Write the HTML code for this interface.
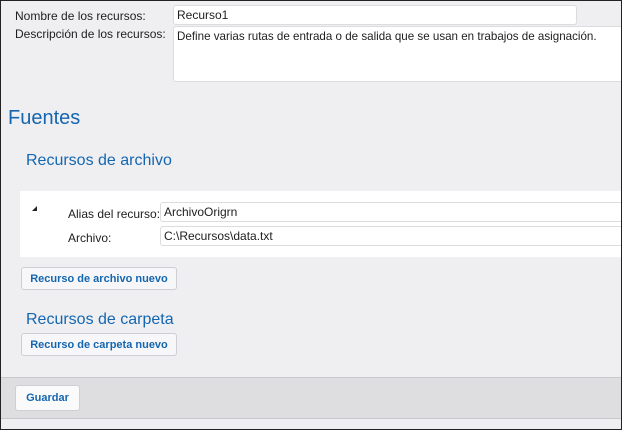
<!DOCTYPE html>
<html><head><style>
*{box-sizing:border-box;margin:0;padding:0}
body{width:622px;height:430px;background:#efeff2;font-family:"Liberation Sans",sans-serif;font-size:12px;color:#1e1e1e;position:relative;overflow:hidden}
.frame{position:absolute;left:0;top:0;width:622px;height:430px;border:1px solid #222;pointer-events:none;z-index:5}
.a{position:absolute;white-space:nowrap}
.inp{position:absolute;background:#fff;border:1px solid #dcdcdf;border-radius:3px;padding:2px 3px;font-size:12px;line-height:14px;white-space:nowrap;overflow:hidden}
.h{color:#1466b0;position:absolute;white-space:nowrap}
.btn{position:absolute;background:#f7f7f9;border:1px solid #cfcfd3;border-radius:3px;color:#1466b0;font-weight:bold;font-size:11px;text-align:center;line-height:22px}
</style></head><body>
<div class="frame"></div>
<div class="a" style="left:15px;top:9px">Nombre de los recursos:</div>
<div class="a" style="left:15px;top:27px">Descripción de los recursos:</div>
<div class="inp" style="left:173px;top:5px;width:404px;height:20px">Recurso1</div>
<div class="inp" style="left:173px;top:26px;width:452px;height:56px;border-radius:3px 0 0 3px;font-size:11.6px;padding-top:3px">Define varias rutas de entrada o de salida que se usan en trabajos de asignación.</div>
<div class="h" style="left:8px;top:107px;font-size:20px">Fuentes</div>
<div class="h" style="left:26px;top:152px;font-size:16px">Recursos de archivo</div>
<div style="position:absolute;left:20px;top:191px;width:602px;height:66px;background:#fff"></div>
<div style="position:absolute;left:32px;top:206px;width:0;height:0;border-left:5px solid transparent;border-bottom:5px solid #222"></div>
<div class="a" style="left:68px;top:207px">Alias del recurso:</div>
<div class="a" style="left:68px;top:231px">Archivo:</div>
<div class="inp" style="left:160px;top:202px;width:470px;height:20px">ArchivoOrigrn</div>
<div class="inp" style="left:160px;top:226px;width:470px;height:20px">C:\Recursos\data.txt</div>
<div class="btn" style="left:21px;top:267px;width:156px;height:23px">Recurso de archivo nuevo</div>
<div class="h" style="left:26px;top:311px;font-size:16px">Recursos de carpeta</div>
<div class="btn" style="left:21px;top:333px;width:156px;height:23px">Recurso de carpeta nuevo</div>
<div style="position:absolute;left:0;top:377px;width:622px;height:42px;background:#dedee1;border-top:1px solid #c8c8cc;border-bottom:1px solid #c8c8cc"></div>
<div class="btn" style="left:15px;top:385px;width:65px;height:26px;line-height:25px;background:#fafafb">Guardar</div>
</body></html>
